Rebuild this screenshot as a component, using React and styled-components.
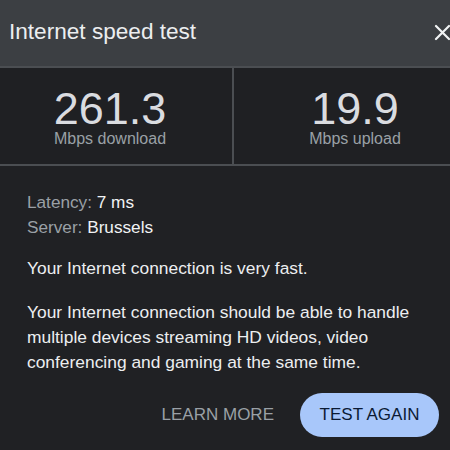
import styled, { createGlobalStyle } from 'styled-components'

const Global = createGlobalStyle`
    html, body { margin: 0; padding: 0; background: #202124; }
    body { font-family: "Liberation Sans", Arial, sans-serif; color: #e8eaed; }
`

// the dialog is a bit wider than the window, so it is cut on both sides
let Viewport = styled.div`
    width: 450px;
    height: 450px;
    overflow: hidden;
    background: #202124;
`

let Dialog = styled.div`
    width: 488px;
    margin-left: -12px;
`

let Header = styled.div`
    height: 66px;
    background: #3c3f43;
    display: flex;
    align-items: center;
    justify-content: space-between;
    padding: 0 25px 0 21px;
    border-bottom: 2px solid #4b4e52;
`

let Title = styled.div`
    font-size: 22.6px;
    color: #eceef0;
    margin-top: -2px;
`

let Close = styled.div`
    display: flex;
    width: 17px;
    height: 17px;
    margin-top: -2px;
`

let Stats = styled.div`
    display: grid;
    grid-template-columns: 244px 2px 1fr;
    height: 96px;
    background: #1f2023;
    border-bottom: 2px solid #4b4e52;
`

let Divider = styled.div`
    background: #4b4e52;
`

let Stat = styled.div`
    display: flex;
    flex-direction: column;
    align-items: center;
    justify-content: center;
    padding-top: 2px;
`

let Value = styled.div`
    font-size: 45px;
    line-height: 42px;
    color: #dadce0;
`

let Unit = styled.div`
    font-size: 16px;
    line-height: 17px;
    color: #9aa0a6;
`

let Body = styled.div`
    padding: 24px 37px 0 39px;
`

let Info = styled.div`
    font-size: 17.2px;
    line-height: 25px;
    color: #f1f3f4;
`

let Key = styled.span`
    color: #9aa0a6;
`

let Text = styled.p`
    margin: ${props => props.top}px 0 0 0;
    font-size: 17.4px;
    line-height: 25px;
    color: #eceef0;
`

let Actions = styled.div`
    display: flex;
    justify-content: flex-end;
    align-items: center;
    gap: 26px;
    margin-top: 18px;
`

let Btn = styled.button`
    font-family: inherit;
    font-size: 17px;
    white-space: nowrap;
    border: none;
    cursor: pointer;
    height: 44px;
    padding: 0;
    border-radius: 22px;
    background: ${props => props.filled ? '#a8c7fa' : 'transparent'};
    color: ${props => props.filled ? '#0b1a33' : '#9aa0a6'};
    width: ${props => props.filled ? '139px' : 'auto'};
`

export default function App() {
    return (
        <Viewport>
            <Global />
            <Dialog>
                <Header>
                    <Title>Internet speed test</Title>
                    <Close>
                        <svg width="17" height="17" viewBox="0 0 17 17">
                            <path d="M2 2 L15 15 M15 2 L2 15" stroke="#f1f3f4" strokeWidth="2.2" strokeLinecap="round" />
                        </svg>
                    </Close>
                </Header>
                <Stats>
                    <Stat>
                        <Value>261.3</Value>
                        <Unit>Mbps download</Unit>
                    </Stat>
                    <Divider />
                    <Stat>
                        <Value>19.9</Value>
                        <Unit>Mbps upload</Unit>
                    </Stat>
                </Stats>
                <Body>
                    <Info><Key>Latency:</Key> 7 ms</Info>
                    <Info><Key>Server:</Key> Brussels</Info>
                    <Text top={16}>Your Internet connection is very fast.</Text>
                    <Text top={19}>Your Internet connection should be able to handle multiple devices streaming HD videos, video conferencing and gaming at the same time.</Text>
                    <Actions>
                        <Btn>LEARN MORE</Btn>
                        <Btn filled>TEST AGAIN</Btn>
                    </Actions>
                </Body>
            </Dialog>
        </Viewport>
    )
}
